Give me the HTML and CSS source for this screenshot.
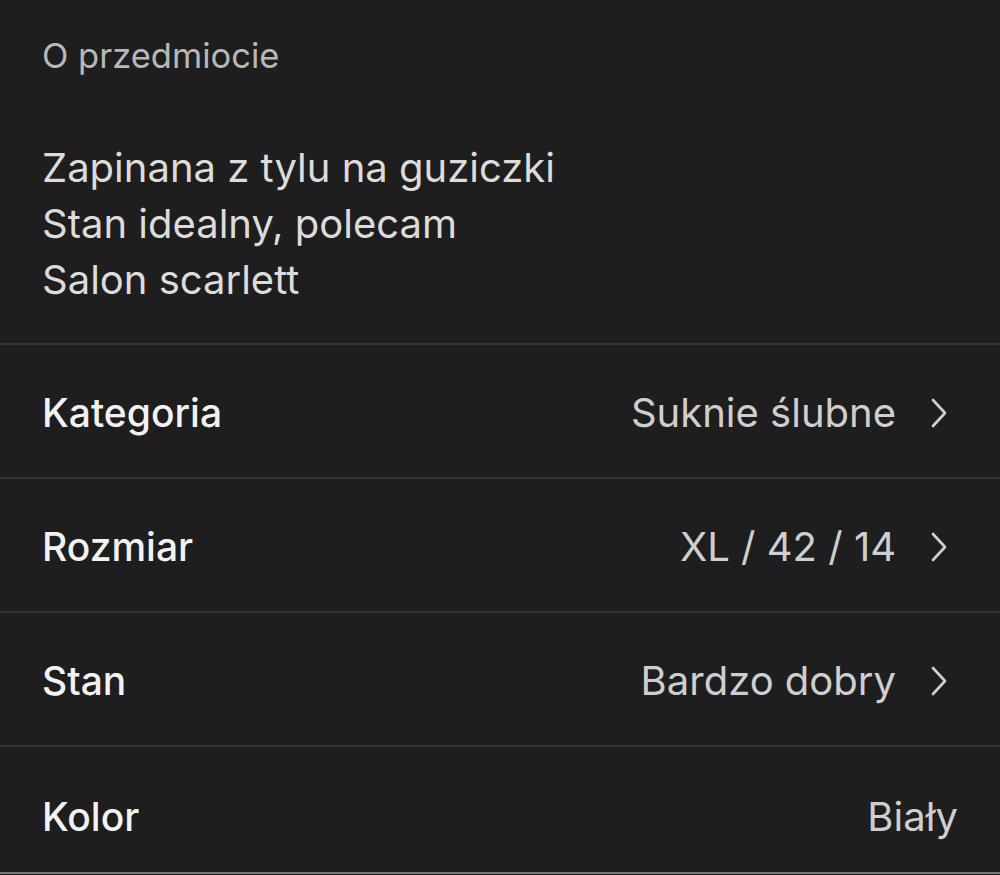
FILE: index.html
```html
<!DOCTYPE html>
<html lang="pl">
<head>
    <meta charset="UTF-8">
    <title>O przedmiocie</title>
    <link rel="stylesheet" href="styles.css">
</head>
<body>

    <!-- opis -->
    <div class="about">
        <div class="about-title">O przedmiocie</div>
        <div class="about-text">
            Zapinana z tylu na guziczki<br>
            Stan idealny, polecam<br>
            Salon scarlett
        </div>
    </div>

    <!-- szczegóły -->
    <div class="row">
        <span class="label">Kategoria</span>
        <span class="value">Suknie ślubne</span>
        <svg class="chevron" viewBox="0 0 18 32"><path d="M3 3 L15 16 L3 29" /></svg>
    </div>
    <div class="row">
        <span class="label">Rozmiar</span>
        <span class="value">XL / 42 / 14</span>
        <svg class="chevron" viewBox="0 0 18 32"><path d="M3 3 L15 16 L3 29" /></svg>
    </div>
    <div class="row">
        <span class="label">Stan</span>
        <span class="value">Bardzo dobry</span>
        <svg class="chevron" viewBox="0 0 18 32"><path d="M3 3 L15 16 L3 29" /></svg>
    </div>
    <div class="row last">
        <span class="label">Kolor</span>
        <span class="value">Biały</span>
    </div>

</body>
</html>
```

FILE: styles.css
```css
body {
    margin: 0;
    background-color: #1e1e1e;
    font-family: Inter, Roboto, sans-serif;
    color: #e6e6e6;
}

/* opis */
.about {
    padding: 36px 42px 35px;
    border-bottom: 2px solid #333;
}
.about-title {
    font-size: 34.5px;
    color: #b8b8b8;
    line-height: 40px;
}
.about-text {
    margin-top: 64px;
    font-size: 40px;
    line-height: 56px;
    color: #dcdcdc;
}

/* wiersze */
.row {
    display: flex;
    align-items: center;
    height: 132px;
    padding: 3px 42px 0;
    box-sizing: border-box;
    height: 134px;
    border-bottom: 2px solid #333;
}
.row.last {
    height: 127px;
    padding-top: 14px;
    border-bottom: 2px solid #777;
}
.label {
    flex: 1;
    font-size: 39px;
    font-weight: 500;
    color: #f2f2f2;
}
.value {
    font-size: 40px;
    color: #cfcfcf;
}
.chevron {
    width: 18px;
    height: 32px;
    margin-left: 34px;
    margin-right: 10px;
    fill: none;
    stroke: #d0d0d0;
    stroke-width: 2.6;
    stroke-linecap: round;
    stroke-linejoin: round;
}
```
